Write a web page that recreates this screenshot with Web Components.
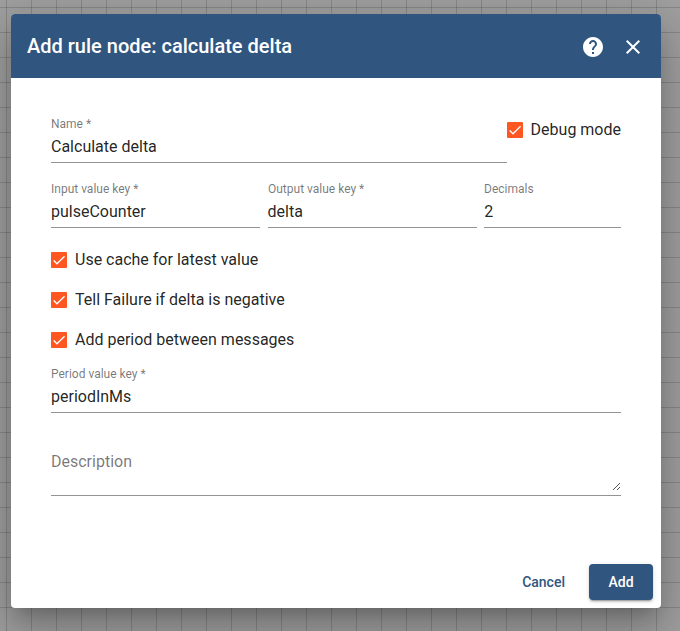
<!DOCTYPE html>
<html lang="en">
<head>
<meta charset="utf-8">
<title>Add rule node</title>
<style>
html, body { margin: 0; height: 100%; }
body { overflow: hidden; font-family: Roboto, "Liberation Sans", sans-serif; color: rgba(0,0,0,.87); }
rule-dialog > description-field { margin-top: 10px; }
</style>
</head>
<body>
<rule-canvas>
  <rule-dialog heading="Add rule node: calculate delta">
    <form-row class="top">
      <text-field label="Name *" value="Calculate delta"></text-field>
      <check-option>Debug mode</check-option>
    </form-row>
    <form-row class="keys">
      <text-field label="Input value key *" value="pulseCounter"></text-field>
      <text-field label="Output value key *" value="delta"></text-field>
      <text-field label="Decimals" value="2"></text-field>
    </form-row>
    <check-option>Use cache for latest value</check-option>
    <check-option>Tell Failure if delta is negative</check-option>
    <check-option>Add period between messages</check-option>
    <text-field label="Period value key *" value="periodInMs"></text-field>
    <description-field>Description</description-field>
    <action-button slot="actions">Cancel</action-button>
    <action-button slot="actions" class="primary">Add</action-button>
  </rule-dialog>
</rule-canvas>
<script>
function define(name, render) {
  customElements.define(name, class extends HTMLElement {
    connectedCallback() {
      if (!this.shadowRoot) this.attachShadow({ mode: 'open' }).innerHTML = render(this);
    }
  });
}

define('rule-canvas', () => `
<style>
:host { display: block; box-sizing: border-box; height: 100vh; padding: 14px 19px 23px 11px;
  background-color: #9f9f9f;
  background-image: linear-gradient(90deg, rgba(0,0,0,.15) 1px, transparent 1px), linear-gradient(rgba(0,0,0,.15) 1px, transparent 1px);
  background-size: 25px 25px; background-position: 6px 7px; }
</style><slot></slot>`);

define('rule-dialog', el => `
<style>
:host { display: flex; flex-direction: column; height: 594px; border-radius: 4px; overflow: hidden; background: #fff;
  box-shadow: 0 11px 15px -7px rgba(0,0,0,.2), 0 24px 38px 3px rgba(0,0,0,.14), 0 9px 46px 8px rgba(0,0,0,.12); }
header { display: flex; align-items: center; height: 64px; box-sizing: border-box; padding: 0 16px; background: #305680; color: #fff; }
h2 { flex: 1; margin: 0; font-size: 20px; line-height: 32px; font-weight: 500; }
svg { width: 24px; height: 24px; fill: currentColor; margin-top: 2px; }
svg + svg { margin-left: 16px; }
main { flex: 1; display: flex; flex-direction: column; padding: 32px 40px 0; }
footer { display: flex; justify-content: flex-end; gap: 8px; padding: 8px; }
</style>
<header><h2>${el.getAttribute('heading')}</h2>
<svg viewBox="0 0 24 24"><path d="M12 2C6.48 2 2 6.48 2 12s4.48 10 10 10 10-4.48 10-10S17.52 2 12 2zm1 17h-2v-2h2v2zm2.070-7.750-.9.920C13.450 12.900 13 13.500 13 15h-2v-.5c0-1.100.45-2.100 1.170-2.830l1.240-1.260c.37-.36.59-.86.59-1.410 0-1.100-.9-2-2-2s-2 .9-2 2H8c0-2.210 1.790-4 4-4s4 1.790 4 4c0 .88-.36 1.680-.93 2.250z"/></svg>
<svg viewBox="0 0 24 24"><path d="M19 6.410 17.590 5 12 10.590 6.410 5 5 6.410 10.590 12 5 17.590 6.410 19 12 13.410 17.590 19 19 17.590 13.410 12z"/></svg>
</header>
<main><slot></slot></main>
<footer><slot name="actions"></slot></footer>`);

define('form-row', () => `
<style>
:host { display: grid; }
:host(.top) { grid-template-columns: 1fr auto; }
:host(.keys) { grid-template-columns: 209px 209px 1fr; column-gap: 7.6px; }
</style><slot></slot>`);

define('text-field', el => `
<style>
:host { display: flex; flex-direction: column; height: 65px; }
label { font-size: 16px; line-height: 18px; height: 14px; margin-top: 7px; white-space: nowrap; color: rgba(0,0,0,.54);
  transform: scale(.75); transform-origin: 0 0; width: 133.33%; }
span { font-size: 16px; line-height: 18px; padding: 7px 0 6px; border-bottom: 1px solid rgba(0,0,0,.42); }
</style><label>${el.getAttribute('label')}</label><span>${el.getAttribute('value')}</span>`);

define('check-option', () => `
<style>
:host { display: flex; align-items: center; height: 40px; gap: 8px; font-size: 16px; line-height: 24px; }
svg { width: 16px; height: 16px; background: #ff5722; border-radius: 1px; }
path { fill: none; stroke: #fafafa; stroke-width: 2.13; }
</style><svg viewBox="0 0 24 24"><path d="M4.100 12.700 9 17.600 20.300 6.300"/></svg><slot></slot>`);

define('description-field', () => `
<style>
:host { display: flex; justify-content: space-between; align-items: flex-end; box-sizing: border-box; height: 61px; border-bottom: 1px solid rgba(0,0,0,.42); font-size: 16px; color: rgba(0,0,0,.54); }
div { line-height: 18px; padding-bottom: 24px; }
svg { width: 9px; height: 9px; margin-bottom: 4px; stroke: #555; fill: none; }
</style><div><slot></slot></div><svg viewBox="0 0 9 9"><path d="M1 8 8 1M5 8 8 5"/></svg>`);

define('action-button', () => `
<style>
:host { display: block; padding: 0 16px; font-size: 14px; font-weight: 500; line-height: 36px; border-radius: 4px; color: #305680; }
:host(.primary) { min-width: 64px; box-sizing: border-box; padding: 0; text-align: center; background: #305680; color: #fff;
  box-shadow: 0 3px 1px -2px rgba(0,0,0,.2), 0 2px 2px rgba(0,0,0,.14), 0 1px 5px rgba(0,0,0,.12); }
</style><slot></slot>`);
</script>
</body>
</html>
